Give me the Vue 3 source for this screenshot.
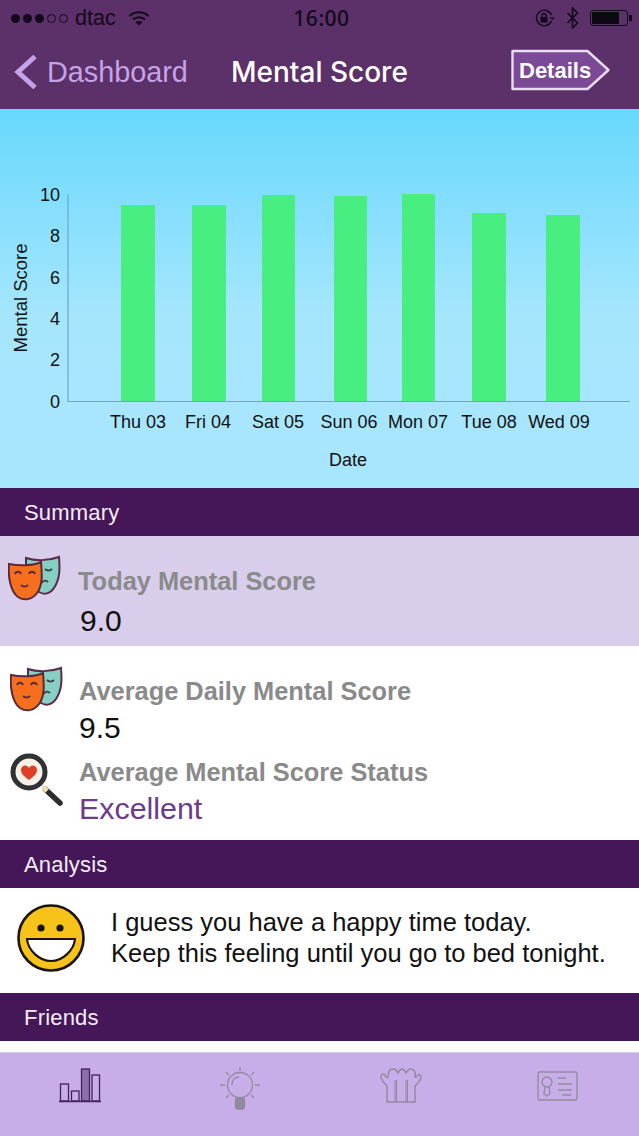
<script setup>
const bars = [
  { label: 'Thu 03', x: 121, w: 34, top: 205, cx: 138 },
  { label: 'Fri 04', x: 192, w: 34, top: 205, cx: 208 },
  { label: 'Sat 05', x: 262, w: 33, top: 195, cx: 278 },
  { label: 'Sun 06', x: 334, w: 33, top: 196, cx: 349 },
  { label: 'Mon 07', x: 402, w: 33, top: 194, cx: 418 },
  { label: 'Tue 08', x: 472, w: 34, top: 213, cx: 489 },
  { label: 'Wed 09', x: 546, w: 34, top: 215, cx: 559 },
]
const ticks = [
  { v: 10, y: 201 },
  { v: 8, y: 242 },
  { v: 6, y: 284 },
  { v: 4, y: 325 },
  { v: 2, y: 366 },
  { v: 0, y: 408 },
]
</script>

<template>
  <div class="screen">
    <header class="top">
      <div class="status">
        <div class="status-left">
          <span class="dots">
            <i class="dot" /><i class="dot" /><i class="dot" /><i class="dot dot--off" /><i class="dot dot--off" />
          </span>
          <span class="carrier">dtac</span>
          <svg width="22" height="16" viewBox="0 0 22 16" fill="none" stroke="#120a1a" stroke-width="2.200">
            <path d="M1.500 6C7 1 15 1 20.500 6" />
            <path d="M5 9.500C8.500 6.500 13.500 6.500 17 9.500" />
            <path d="M11 15.500l-3.600-3.400c2-1.500 5.200-1.500 7.200 0z" fill="#120a1a" stroke="none" />
          </svg>
        </div>
        <span class="clock">16:00</span>
        <div class="status-right">
          <svg width="22" height="20" viewBox="0 0 22 20" fill="none" stroke="#120a1a" stroke-width="1.400">
            <path d="M17.500 13A7.800 7.800 0 1 1 17.500 7" />
            <path d="M15.500 9.500l3 2.500 2.500-2.500" fill="#120a1a" stroke="none" />
            <rect x="6.500" y="9" width="7" height="5.500" fill="#120a1a" stroke="none" />
            <path d="M8 9V7.500a2 2 0 0 1 4 0V9" />
          </svg>
          <svg width="14" height="22" viewBox="0 0 14 22" fill="none" stroke="#120a1a" stroke-width="1.600">
            <path d="M1.500 6l10 10-5 5V1l5 5-10 10" />
          </svg>
          <span class="battery"><span class="battery-fill" /></span>
        </div>
      </div>
      <nav class="nav">
        <div class="back">
          <svg width="24" height="36" viewBox="0 0 24 36" fill="none" stroke="#c6a3e6" stroke-width="5">
            <path d="M21 2.500L4 18l17 15.500" />
          </svg>
          <span>Dashboard</span>
        </div>
        <h1 class="title">Mental Score</h1>
        <div class="details">
          <svg class="details-shape" width="100" height="42" viewBox="0 0 100 42">
            <path d="M1.500 2h75l21 19-21 19h-75z" fill="#7b4a97" stroke="#eadcf3" stroke-width="2.400" stroke-linejoin="round" />
          </svg>
          <span class="details-text">Details</span>
        </div>
      </nav>
    </header>

    <section class="chart">
      <svg width="639" height="379" viewBox="0 109 639 379" class="chart-svg">
        <path d="M68 194V401.500H630" fill="none" stroke="#6fa6c6" stroke-width="1.200" />
        <rect v-for="b in bars" :key="b.label" :x="b.x" :y="b.top" :width="b.w" :height="401 - b.top" fill="#48ef80" />
        <text v-for="t in ticks" :key="t.v" x="60" :y="t.y" text-anchor="end" class="chart-label">{{ t.v }}</text>
        <text v-for="b in bars" :key="'l' + b.label" :x="b.cx" y="428" text-anchor="middle" class="chart-label">{{ b.label }}</text>
        <text x="348" y="466" text-anchor="middle" class="chart-label">Date</text>
        <text transform="translate(27 298) rotate(-90)" text-anchor="middle" class="chart-label chart-label--axis">Mental Score</text>
      </svg>
    </section>

    <div class="band">Summary</div>

    <div class="today">
      <svg class="masks masks--today" width="54" height="48" viewBox="0 0 54 48">
        <use href="#masks-art" />
      </svg>
      <div class="metric metric--today">
        <div class="metric-name">Today Mental Score</div>
        <div class="metric-value">9.0</div>
      </div>
    </div>

    <div class="averages">
      <div class="avg-row avg-row--daily">
        <svg class="masks" width="54" height="48" viewBox="0 0 54 48">
          <defs>
            <g id="masks-art">
              <path d="M18 4c9 3 22 3 33-1 1 12 1 22-5 31-4 6-10 7-15 4L18 16z" fill="#85cfc3" stroke="#5b2a4a" stroke-width="2" />
              <path d="M37 15c2 2 5 2 7 0" fill="none" stroke="#3f3a4a" stroke-width="1.800" />
              <path d="M34 29c1-3 4-3 6-1" fill="none" stroke="#3f3a4a" stroke-width="1.800" />
              <path d="M1 10c10 2 24 2 32-2 1 11 2 23-4 31-5 7-13 8-19 4C2 37 0 22 1 10z" fill="#f66f1f" stroke="#5b2a3a" stroke-width="2" />
              <path d="M7 20c1-3 5-3 6 0M21 20c1-3 5-3 6 0" fill="none" stroke="#5b2a3a" stroke-width="1.800" />
              <path d="M13 31c2 2 5 2 7 0" fill="none" stroke="#5b2a3a" stroke-width="1.800" />
            </g>
          </defs>
          <use href="#masks-art" />
        </svg>
        <div class="metric metric--small metric--daily">
          <div class="metric-name">Average Daily Mental Score</div>
          <div class="metric-value">9.5</div>
        </div>
      </div>
      <div class="avg-row">
        <svg class="glass" width="54" height="54" viewBox="0 0 54 54">
          <path d="M35 36l15 14" stroke="#2d2d2d" stroke-width="5.500" stroke-linecap="round" />
          <path d="M33 34l4 4" stroke="#f1e2b0" stroke-width="5" />
          <circle cx="19" cy="19" r="16" fill="#f7f1e8" stroke="#2f3133" stroke-width="5" />
          <path d="M19 27c-4-3-8-6-8-10 0-5 6-6 8-2 2-4 8-3 8 2 0 4-4 7-8 10z" fill="#dd3f27" />
        </svg>
        <div class="metric metric--small">
          <div class="metric-name">Average Mental Score Status</div>
          <div class="metric-status">Excellent</div>
        </div>
      </div>
    </div>

    <div class="band">Analysis</div>

    <div class="analysis">
      <svg width="70" height="70" viewBox="0 0 70 70">
        <circle cx="35" cy="35" r="32.500" fill="#f7c318" stroke="#1a1408" stroke-width="2.600" />
        <circle cx="25" cy="25" r="3.600" fill="#1a1408" />
        <circle cx="44" cy="25" r="3.600" fill="#1a1408" />
        <path d="M11 36H59C58 47 47 58 35 58S12 47 11 36z" fill="#fff" stroke="#1a1408" stroke-width="2.200" />
      </svg>
      <p class="analysis-text">I guess you have a happy time today.<br />Keep this feeling until you go to bed tonight.</p>
    </div>

    <div class="band">Friends</div>
    <div class="gap" />

    <footer class="tabs">
      <svg width="44" height="38" viewBox="0 0 44 38" fill="none" stroke="#43205f" stroke-width="1.300">
        <rect x="2.500" y="18" width="8" height="17" />
        <rect x="13.500" y="25" width="7.500" height="10" />
        <rect x="23.500" y="3" width="8" height="32" fill="#8a72a8" />
        <rect x="34" y="9" width="7.500" height="26" />
        <path d="M1 35.500H43" stroke-width="1.600" />
      </svg>
      <svg width="42" height="46" viewBox="0 0 42 46" fill="none" stroke="#93899f" stroke-width="1.300">
        <circle cx="21" cy="19" r="12.500" />
        <rect x="16.500" y="32" width="9" height="11" rx="2" fill="#93899f" />
        <path d="M21 1v4M7 6l3 3M35 6l-3 3M1 19h5M36 19h5M7 32l3-3M35 32l-3-3" />
        <path d="M13 19c0-5 3-8 7-8" />
      </svg>
      <svg width="42" height="38" viewBox="0 0 42 38" fill="none" stroke="#93899f" stroke-width="1.500">
        <path d="M7 36V20C4 17 1 14 1 11 1 8 4 7 5 9c1 2 2 3 3 2 0-5 2-8 5-8s4 2 5 4c1-2 2-4 4-4s3 2 4 4c1-2 2-4 5-4s5 3 4 8c1 1 2-1 3-2 1-1 3 0 3 2 0 3-3 6-6 9V36z" />
        <path d="M15 14V36M16.500 14V36M26 14V36M27.500 14V36" stroke-width="1.100" />
      </svg>
      <svg class="tab-card" width="41" height="30" viewBox="0 0 41 30" fill="none" stroke="#93899f" stroke-width="1.300">
        <rect x="1" y="1" width="39" height="28" rx="1.500" />
        <circle cx="10" cy="11" r="5" />
        <path d="M8 16l-1 7 3 2 3-2-1-7" />
        <path d="M21 7h8M21 13h14M21 19h14M25 24h9" />
      </svg>
    </footer>
  </div>
</template>

<style scoped>
.screen {
  width: 639px;
  height: 1136px;
  overflow: hidden;
  background: #fff;
  font-family: "Liberation Sans", Arial, sans-serif;
}

.top {
  height: 109px;
  background: #5c3069;
}

.status {
  height: 36px;
  padding: 0 11px;
  display: grid;
  grid-template-columns: 1fr auto 1fr;
  align-items: center;
  color: #120a1a;
}

.status-left {
  display: flex;
  align-items: center;
  gap: 12px;
}

.carrier {
  font-size: 21.500px;
  margin-left: -2px;
}

.dots {
  display: flex;
  gap: 3px;
  margin-right: -3px;
}

.dot {
  width: 9px;
  height: 9px;
  border-radius: 50%;
  background: #120a1a;
  box-sizing: border-box;
}

.dot--off {
  background: none;
  border: 1px solid #120a1a;
}

.clock {
  padding-left: 4px;
  font-size: 21px;
  letter-spacing: 0.5px;
  font-family: "Noto Sans", sans-serif;
  font-weight: 500;
}

.status-right {
  display: flex;
  align-items: center;
  justify-content: flex-end;
  gap: 10px;
}

.battery {
  width: 38px;
  height: 16px;
  border: 1px solid #120a1a;
  border-radius: 3px;
  padding: 1px;
  box-sizing: border-box;
  position: relative;
  display: block;
}

.battery::after {
  content: "";
  position: absolute;
  right: -5px;
  top: 4px;
  width: 3px;
  height: 6px;
  background: #120a1a;
}

.battery-fill {
  display: block;
  width: 27px;
  height: 12px;
  background: #0c0812;
}

.nav {
  height: 73px;
  padding: 0 28px 1px 14px;
  display: flex;
  align-items: center;
  box-sizing: border-box;
}

.back {
  display: flex;
  align-items: center;
  gap: 9px;
  width: 217px;
  color: #c6a3e6;
  font-size: 28.800px;
}

.title {
  margin: 0;
  color: #fff;
  font-size: 28px;
  font-weight: 500;
  font-family: Inter, sans-serif;
  flex: 1;
}

.details {
  width: 100px;
  height: 42px;
  margin-top: -4px;
  position: relative;
}

.details-shape {
  display: block;
}

.details-text {
  position: absolute;
  left: 8px;
  top: 9px;
  color: #fff;
  font-size: 22px;
  font-weight: 700;
}

.chart {
  height: 379px;
  background: linear-gradient(180deg, #68d8fd 0%, #a6e6fd 55%, #a8e6fe 100%);
}

.chart-svg {
  display: block;
}

.chart-label {
  font-family: "Liberation Sans", Arial, sans-serif;
  font-size: 18px;
  fill: #111;
}

.chart-label--axis {
  font-size: 18.500px;
}

.band {
  height: 48px;
  padding: 1px 0 0 24px;
  box-sizing: border-box;
  display: flex;
  align-items: center;
  background: #451758;
  color: #f4eef7;
  font-size: 22px;
  letter-spacing: 0.2px;
}

.today {
  height: 110px;
  background: #d8cdeb;
  display: flex;
  padding: 18px 0 0 8px;
  box-sizing: border-box;
}

.metric {
  margin-left: 16px;
}

.metric--today {
  margin-top: 10px;
}

.metric--daily {
  margin-top: 9px;
}

.metric-name {
  color: #8a8a8a;
  font-size: 25.400px;
  font-weight: 700;
  line-height: 34px;
}

.metric-value {
  margin-top: 5px;
  padding-left: 2px;
  color: #111;
  font-size: 30px;
  line-height: 36px;
}

.averages {
  height: 194px;
  padding: 19px 0 0 10px;
  box-sizing: border-box;
}

.avg-row {
  display: flex;
  margin-bottom: 8px;
}

.avg-row--daily {
  height: 82px;
}

.glass {
  margin-top: -2px;
}

.metric--small {
  margin-left: 15px;
}

.metric--small .metric-value {
  margin-top: 2px;
  padding-left: 0;
}

.metric-status {
  color: #6c3a8e;
  font-size: 30.400px;
  line-height: 38px;
}

.analysis {
  height: 105px;
  padding: 0 0 5px 16px;
  display: flex;
  align-items: center;
  gap: 25px;
  box-sizing: border-box;
}

.analysis-text {
  margin: 0;
  color: #111;
  font-size: 25.500px;
  line-height: 31px;
}

.gap {
  height: 11px;
}

.tabs {
  height: 84px;
  background: #c8aee8;
  border-top: 1px solid #d8cde6;
  box-sizing: border-box;
  padding: 13px 0 0 58px;
  display: grid;
  grid-template-columns: 161px 161px 157px 1fr;
  align-items: start;
}

.tab-card {
  margin-top: 5px;
}
</style>
